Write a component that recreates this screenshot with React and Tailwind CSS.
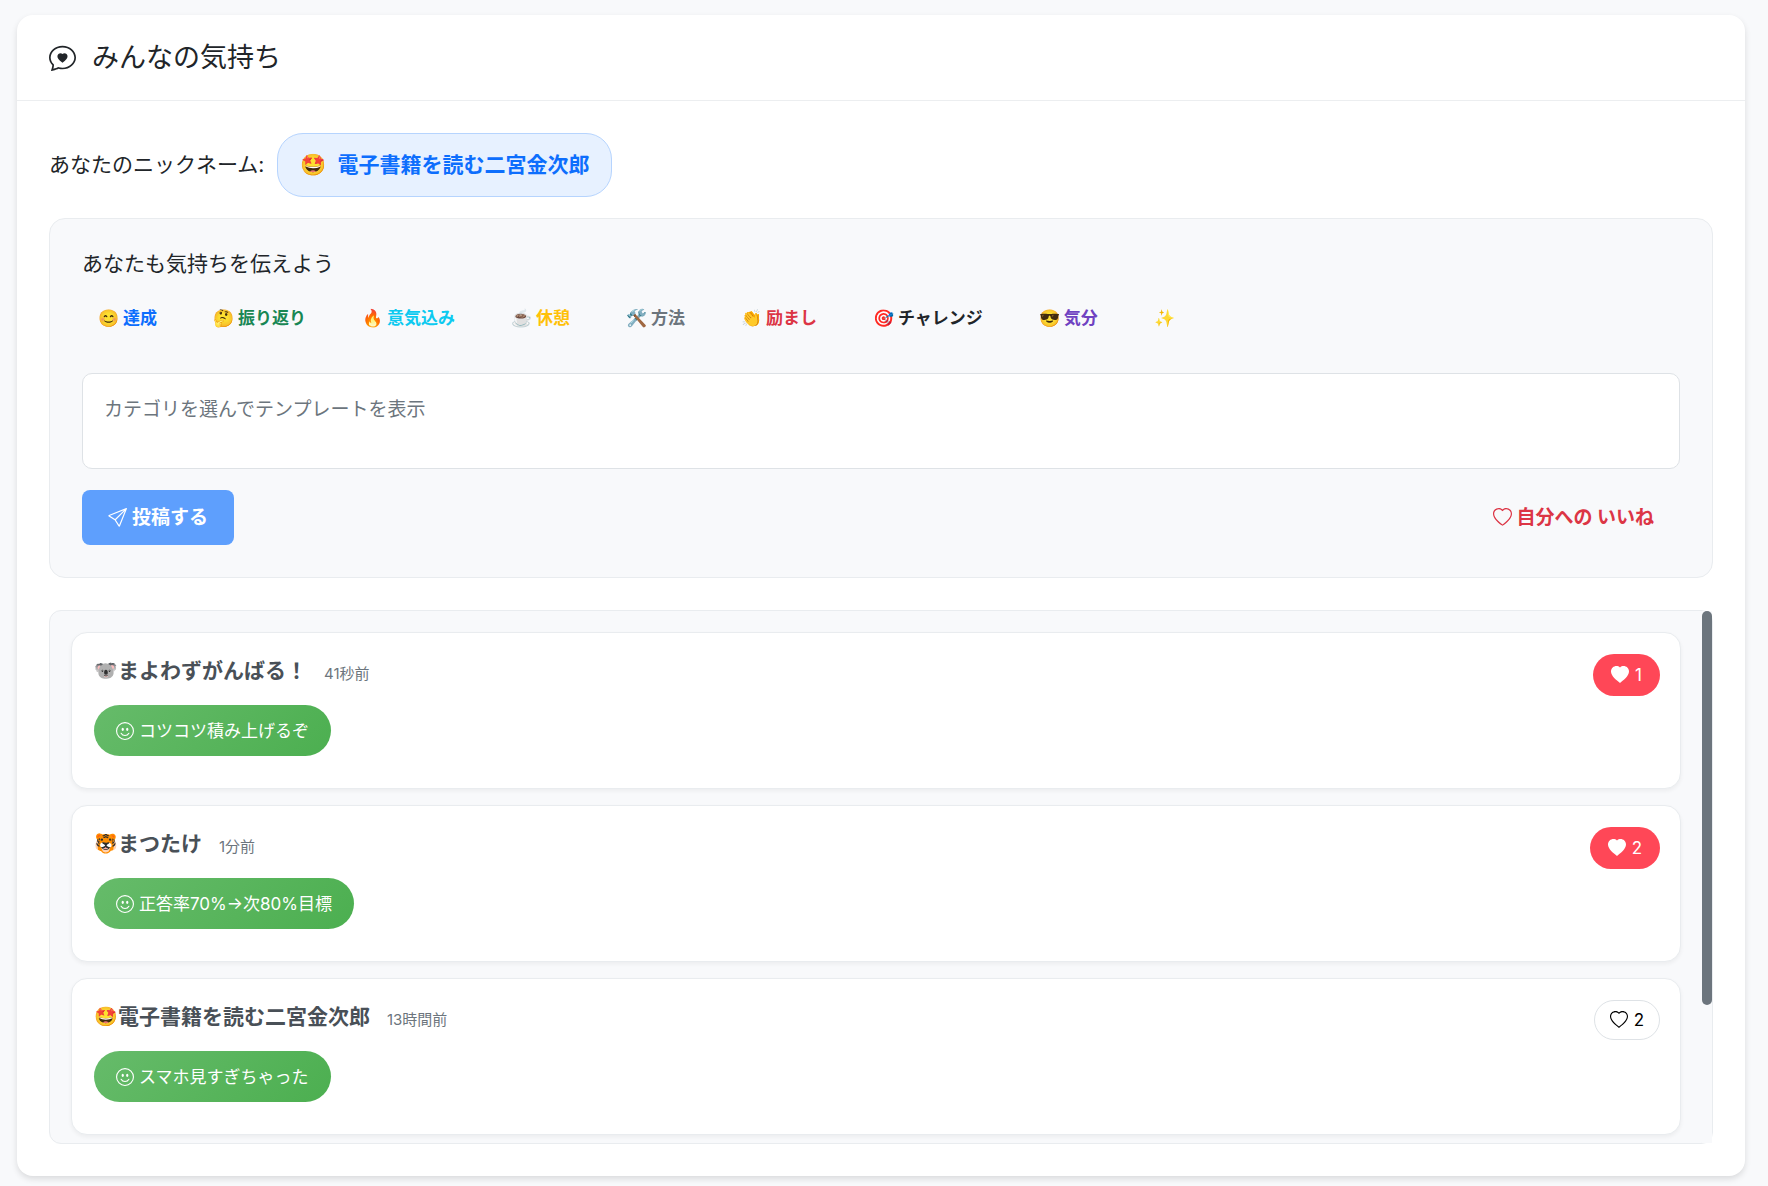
import React, { useState } from 'react';
import { BsChatHeart, BsEmojiSmile, BsHeart, BsHeartFill, BsSend } from 'react-icons/bs';

const categories = [
  { emoji: '😊', label: '達成', color: 'text-[#0d6efd]' },
  { emoji: '🤔', label: '振り返り', color: 'text-[#198754]' },
  { emoji: '🔥', label: '意気込み', color: 'text-[#0dcaf0]' },
  { emoji: '☕', label: '休憩', color: 'text-[#ffc107]' },
  { emoji: '🛠️', label: '方法', color: 'text-[#6c757d]' },
  { emoji: '👏', label: '励まし', color: 'text-[#dc3545]' },
  { emoji: '🎯', label: 'チャレンジ', color: 'text-[#212529]' },
  { emoji: '😎', label: '気分', color: 'text-[#6f42c1]' },
  { emoji: '✨', label: '', color: 'text-[#212529]' },
];

const initialPosts = [
  { id: 1, emoji: '🐨', name: 'まよわずがんばる！', time: '41秒前', message: 'コツコツ積み上げるぞ', likes: 1, liked: true },
  { id: 2, emoji: '🐯', name: 'まつたけ', time: '1分前', message: '正答率70%→次80%目標', likes: 2, liked: true },
  { id: 3, emoji: '🤩', name: '電子書籍を読む二宮金次郎', time: '13時間前', message: 'スマホ見すぎちゃった', likes: 2, liked: false },
];

const LikeButton = ({ count, liked, onClick }) => (
  <button
    type="button"
    onClick={onClick}
    className={`flex shrink-0 items-center gap-[6px] rounded-full text-[17px] leading-6 ${
      liked ? 'h-[42px] bg-[#ff4757] px-[18px] text-white' : 'h-10 border border-[#dee2e6] bg-white px-[15px] text-black'
    }`}
  >
    {liked ? <BsHeartFill size={18} /> : <BsHeart size={18} />}
    {count}
  </button>
);

const Post = ({ post, onLike }) => (
  <li className="flex items-start justify-between rounded-2xl border border-[#e9ecef] bg-white py-[21px] pr-5 pl-[22px] shadow-[0_2px_4px_rgba(0,0,0,0.05)]">
    <div className="pb-[11px]">
      <div className="flex items-center text-[21px] leading-[34px] text-[#495057]">
        <span className="text-[19px]">{post.emoji}</span>
        <span className="font-bold">{post.name}</span>
        <span className="ml-[17px] pt-[5px] text-[15px] leading-[29px] text-[#6c757d]">{post.time}</span>
      </div>
      <p className="mt-[17px] inline-flex h-[51px] items-center gap-[5px] rounded-full bg-[linear-gradient(135deg,#66bb6a,#4caf50)] px-[22px] text-[17px] leading-6 text-white">
        <BsEmojiSmile size={18} />
        {post.message}
      </p>
    </div>
    <LikeButton count={post.likes} liked={post.liked} onClick={onLike} />
  </li>
);

const App = () => {
  const [posts, setPosts] = useState(initialPosts);
  const [text, setText] = useState('');

  const toggleLike = (id) => {
    setPosts(posts.map((p) => (
      p.id === id ? { ...p, liked: !p.liked, likes: p.likes + (p.liked ? -1 : 1) } : p
    )));
  };

  return (
    <div className="min-h-screen bg-[#f8f9fb] pt-[15px] pr-[23px] pb-[11px] pl-[17px] font-[Inter,'Noto_Sans_CJK_JP',sans-serif] text-[#212529]">
      <main className="rounded-2xl bg-white shadow-[0_3px_6px_rgba(0,0,0,0.12)]">
        {/* Header */}
        <header className="flex items-center gap-4 border-b border-[#eceef0] px-8 py-[22px]">
          <BsChatHeart size={27} />
          <h1 className="text-[27px] leading-[41px]">みんなの気持ち</h1>
        </header>

        <div className="p-8">
          {/* Nickname */}
          <div className="flex items-center gap-[13px] text-[21px] leading-8">
            <span>あなたのニックネーム:</span>
            <span className="flex h-16 items-center gap-[11px] rounded-[26px] border border-[#b6d4fe] bg-[#e7f1ff] px-[22px] text-[#0d6efd]">
              <span>🤩</span>
              <span className="font-bold">電子書籍を読む二宮金次郎</span>
            </span>
          </div>

          {/* Post form */}
          <form
            onSubmit={(e) => e.preventDefault()}
            className="mt-[21px] rounded-2xl border border-[#e9ecef] bg-[#f8f9fb] p-8"
          >
            <label htmlFor="message" className="block text-[21px] leading-[26px]">あなたも気持ちを伝えよう</label>
            <div className="mt-[21px] flex flex-wrap gap-6">
              {categories.map((c) => (
                <button
                  key={c.emoji}
                  type="button"
                  className={`flex h-10 items-center gap-1 px-4 text-[17px] leading-6 font-bold ${c.color}`}
                >
                  <span className="font-normal">{c.emoji}</span>
                  {c.label}
                </button>
              ))}
            </div>
            <textarea
              id="message"
              value={text}
              onChange={(e) => setText(e.target.value)}
              placeholder="カテゴリを選んでテンプレートを表示"
              className="mt-[35px] block h-24 w-full resize-none rounded-[10px] border border-[#dee2e6] bg-white px-[21px] py-[22px] text-[19px] leading-7 placeholder:text-[#6c757d]"
            />
            <div className="mt-[21px] flex items-center justify-between text-[19px] leading-6 font-bold">
              <button type="submit" className="flex h-[55px] items-center gap-[5px] rounded-lg bg-[#5e9ffd] px-[26px] text-white">
                <BsSend size={19} />
                投稿する
              </button>
              <button type="button" className="flex h-[55px] items-center gap-[5px] px-[26px] text-[#dc3545]">
                <BsHeart size={19} />
                自分への いいね
              </button>
            </div>
          </form>

          {/* Timeline */}
          <div className="mt-8 flex rounded-xl border border-[#e9ecef] bg-[#f8f9fb]">
            <ul className="flex grow flex-col gap-4 px-[21px] pt-[21px] pb-2">
              {posts.map((post) => (
                <Post key={post.id} post={post} onLike={() => toggleLike(post.id)} />
              ))}
            </ul>
            <div className="w-[10px] bg-[#f8f9fb]">
              <div className="h-[74%] rounded-full bg-[#6c757d]" />
            </div>
          </div>
        </div>
      </main>
    </div>
  );
};

export default App;
